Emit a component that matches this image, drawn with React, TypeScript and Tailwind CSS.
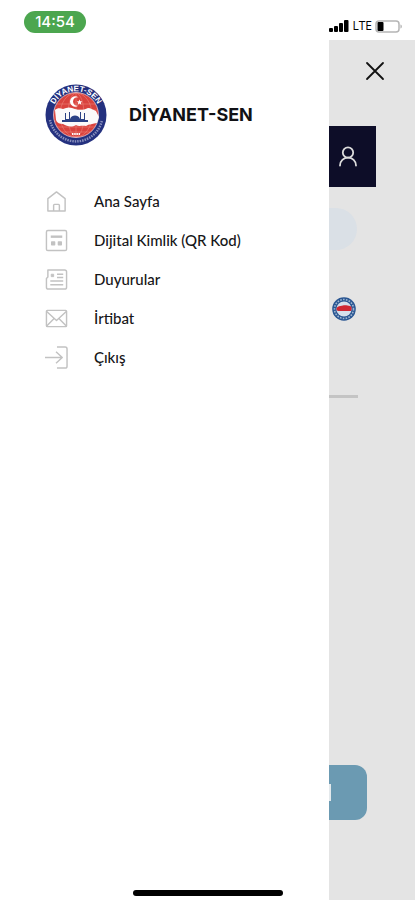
import type { ReactNode } from 'react';

type MenuItem = {
  label: string;
  href: string;
  icon: ReactNode;
};

const items: MenuItem[] = [
  {
    label: 'Ana Sayfa',
    href: '#ana-sayfa',
    icon: (
      <>
        <path d="M3 9 12 2l9 7v13H3z" />
        <path d="M9 22v-6a1 1 0 0 1 1-1h4a1 1 0 0 1 1 1v6" />
      </>
    ),
  },
  {
    label: 'Dijital Kimlik (QR Kod)',
    href: '#dijital-kimlik',
    icon: (
      <>
        <rect x="1.5" y="1.5" width="21" height="21" rx="1.5" />
        <path d="M6 8h12" strokeWidth="2.5" />
        <path d="M7 13.5h3v3H7zM14 13.5h3v3h-3z" fill="currentColor" />
      </>
    ),
  },
  {
    label: 'Duyurular',
    href: '#duyurular',
    icon: (
      <>
        <path d="M3 2h17.5a2 2 0 0 1 2 2v16a2 2 0 0 1-2 2h-17a2 2 0 0 1-2-2v-9L3 9.500z" />
        <path d="M6.500 6.500H9V9H6.500z" fill="currentColor" strokeWidth="1" />
        <path d="M12.500 6.500H19M12.500 10H19M5.500 13.500H19M5.500 17.500H19" />
      </>
    ),
  },
  {
    label: 'İrtibat',
    href: '#irtibat',
    icon: (
      <>
        <rect x="1.5" y="3.5" width="21" height="17" rx="1" />
        <path d="M1.500 4.500 12 14 22.500 4.500M1.500 20l8-8M22.500 20l-8-8" />
      </>
    ),
  },
  {
    label: 'Çıkış',
    href: '#cikis',
    icon: <path d="M0 12h18M11.500 6l6.500 6-6.500 6M12.500 1h8.500a2 2 0 0 1 2 2v18a2 2 0 0 1-2 2h-8.500" />,
  },
];

function Emblem() {
  return (
    <svg viewBox="0 0 62 62" className="size-[62px] shrink-0" role="img" aria-label="Diyanet-Sen">
      <defs>
        <path id="arc-top" d="M8 39A24.200 24.200 0 1 1 54 39" />
      </defs>
      <circle cx="31" cy="31" r="30.500" fill="#24317f" />
      <circle cx="31" cy="31" r="22.500" fill="#d9423d" />
      <g fill="none" stroke="#ef8d83" strokeWidth="0.5">
        <ellipse cx="31" cy="31" rx="8" ry="22" />
        <ellipse cx="31" cy="31" rx="16" ry="22" />
        <path d="M12 20h38M9 26h44M9 37h44M12 43h38M17 48h28M31 9v44" />
      </g>
      <circle cx="31" cy="31" r="22.500" fill="none" stroke="#f4d8dc" strokeWidth="0.7" />
      <path
        d="M10 26c2-2 5-2 8-1 4-2 8-2 12 0 5 1.500 9 1 13-1 3 0 5 2 8 3l3 6-2 6c-4 1-8 1-11 3-4-1-7 1-10-1-5 3-9 1-13-1-3 0-6-1-7-4z"
        fill="#fbfafa"
      />
      <path
        d="M17 38v-2h3v-7h1v6h3v-7h1v7c1-3 3-3.500 5-3.500s4 .5 5 3.500v-7h1v7h3v-6h1v7h3v2z"
        fill="#2b4184"
      />
      <path d="M33.500 13.500a5.200 5.200 0 1 0 0 8 4.200 4.200 0 1 1 0-8z" fill="#fff" />
      <path d="m34.500 15.500.8 1.800 2 .1-1.500 1.300.5 2-1.800-1.100-1.700 1.100.5-2-1.500-1.300 2-.1z" fill="#fff" />
      <text fill="#fff" fontSize="8" fontWeight="700" fontFamily="Liberation Sans, sans-serif" textAnchor="middle">
        <textPath href="#arc-top" startOffset="50%">
          DİYANET-SEN
        </textPath>
      </text>
      <path d="M5 36a26.500 26.500 0 0 0 52 0" fill="none" stroke="#8990bd" strokeWidth="2.500" strokeDasharray="1.500 1" />
      <path d="M27 50h8" stroke="#fff" strokeWidth="2" strokeDasharray="1.500 .7" />
    </svg>
  );
}

function SmallEmblem() {
  return (
    <svg viewBox="0 0 24 24" className="size-6" aria-hidden="true">
      <circle cx="12" cy="12" r="11.800" fill="#2a5692" />
      <circle cx="12" cy="12" r="9.500" fill="none" stroke="#9fb6d2" strokeWidth="1.600" strokeDasharray="1.600 1.300" />
      <circle cx="12" cy="12" r="7.600" fill="#d5dfeb" />
      <path d="M5.500 10c2-1.500 4-1 5.500-1.500s5 0 7 .5c2 0 2 3.500 1 5H6c-2-.5-2-3-.5-4z" fill="#cf2733" />
    </svg>
  );
}

function StatusBar() {
  return (
    <header className="flex h-10 shrink-0 items-start justify-between bg-white pt-[11px] pr-3 pl-6">
      <span className="flex h-[22px] w-[62px] items-center justify-center rounded-full bg-[#4ca64f] font-['Inter',sans-serif] text-[15px] font-medium text-white">
        14:54
      </span>
      <div className="flex h-[30px] items-center gap-[3px] text-black">
        <svg viewBox="0 0 20 12" className="h-3 w-5" fill="currentColor" aria-hidden="true">
          <rect x="0" y="8" width="4" height="4" rx="1" />
          <rect x="5" y="6" width="4" height="6" rx="1" />
          <rect x="10" y="3" width="4" height="9" rx="1" />
          <rect x="15" y="0" width="4.5" height="12" rx="1" />
        </svg>
        <span className="font-['Open_Sans',sans-serif] text-xs">LTE</span>
        <svg viewBox="0 0 28 13" className="h-[13px] w-7" aria-hidden="true">
          <rect x="1" y="1" width="23" height="11" rx="3" fill="none" stroke="#b5b5b5" strokeWidth="1.500" />
          <rect x="2.500" y="2" width="6" height="9" rx="1" fill="#000" />
          <path d="M25.500 4.500c1.700.5 1.700 3.500 0 4z" fill="#aaa" />
        </svg>
      </div>
    </header>
  );
}

function Drawer() {
  return (
    <aside className="min-w-0 flex-1 bg-white pt-11 pl-[45px] font-['Lato',sans-serif] text-[#161618]">
      <div className="flex items-center gap-[22px]">
        <Emblem />
        <h1 className="font-['Inter',sans-serif] text-lg font-bold text-[#111115]">DİYANET-SEN</h1>
      </div>
      <nav className="mt-9">
        <ul>
          {items.map((item) => (
            <li key={item.href}>
              <a href={item.href} className="flex h-[39px] items-center gap-[26px] text-[15px] font-medium">
                <svg viewBox="0 0 24 24" className="size-[23px] shrink-0 text-[#c2c2c2]" fill="none" stroke="currentColor" strokeWidth="1.500" strokeLinejoin="round" aria-hidden="true">
                  {item.icon}
                </svg>
                {item.label}
              </a>
            </li>
          ))}
        </ul>
      </nav>
    </aside>
  );
}

// Visible edge of the home screen behind the open menu
function Backdrop() {
  return (
    <div className="flex w-[86px] shrink-0 flex-col items-start overflow-hidden bg-[#e4e4e4]">
      <button type="button" aria-label="Menüyü kapat" className="mt-[19px] mr-7 self-end">
        <svg viewBox="0 0 24 24" className="size-6" fill="none" stroke="#111" strokeWidth="1.800" strokeLinecap="round" aria-hidden="true">
          <path d="m4 4 16 16M20 4 4 20" />
        </svg>
      </button>
      <button type="button" aria-label="Profil" className="mt-[43px] flex h-[61px] w-[47px] items-center justify-center bg-[#0d0d28] pr-2.5">
        <svg viewBox="0 0 20 22" className="h-[22px] w-5" fill="none" stroke="#dcdcdc" strokeWidth="1.800" strokeLinecap="round" aria-hidden="true">
          <circle cx="10" cy="6.500" r="5.200" />
          <path d="M2 19.500c0-4.600 3.600-7.800 8-7.800s8 3.200 8 7.800" />
        </svg>
      </button>
      <div className="mt-[21px] h-[42px] w-7 rounded-r-full bg-[#dae0e6]" />
      <div className="mt-[47px] ml-[3px]">
        <SmallEmblem />
      </div>
      <div className="mt-[74px] h-[3px] w-[29px] bg-[#c4c4c4]" />
      <div className="mt-auto mb-20 flex h-[55px] w-[38px] items-center rounded-r-xl bg-[#6b9ab2]">
        <span className="h-[17px] w-0.5 bg-[#e4e9ec]" />
      </div>
    </div>
  );
}

export default function App() {
  return (
    <div className="relative flex min-h-screen flex-col bg-white">
      <StatusBar />
      <main className="flex flex-1">
        <Drawer />
        <Backdrop />
      </main>
      <div className="absolute inset-x-0 bottom-1 flex justify-center">
        <div className="h-[6px] w-[150px] rounded-full bg-black" />
      </div>
    </div>
  );
}
